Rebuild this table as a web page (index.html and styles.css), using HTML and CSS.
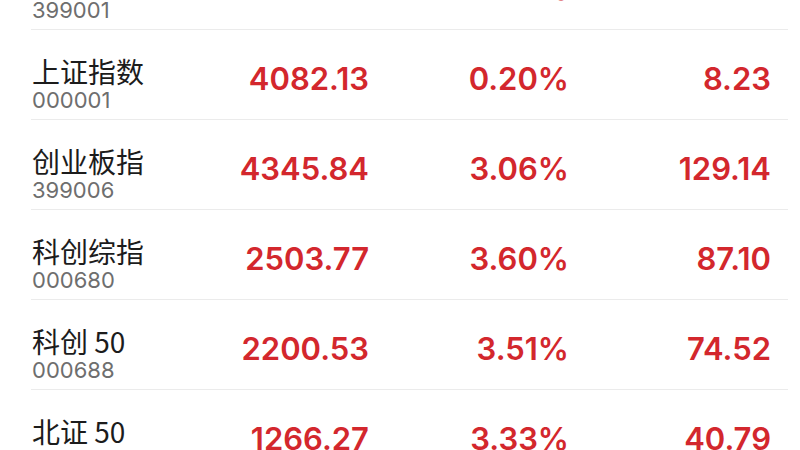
FILE: index.html
```html
<!DOCTYPE html>
<html lang="zh-CN">
<head>
    <meta charset="UTF-8">
    <meta name="viewport" content="width=device-width, initial-scale=1.0">
    <title>指数行情</title>
    <link rel="stylesheet" href="styles.css">
</head>
<body>
    <div class="quote-list">
        <div class="quote-row">
            <div class="name-cell">
                <div class="index-name">深证成指</div>
                <div class="index-code">399001</div>
            </div>
            <div class="num price">13150.52</div>
            <div class="num pct">0.52%</div>
            <div class="num change">68.30</div>
        </div>
        <div class="quote-row">
            <div class="name-cell">
                <div class="index-name">上证指数</div>
                <div class="index-code">000001</div>
            </div>
            <div class="num price">4082.13</div>
            <div class="num pct">0.20%</div>
            <div class="num change">8.23</div>
        </div>
        <div class="quote-row">
            <div class="name-cell">
                <div class="index-name">创业板指</div>
                <div class="index-code">399006</div>
            </div>
            <div class="num price">4345.84</div>
            <div class="num pct">3.06%</div>
            <div class="num change">129.14</div>
        </div>
        <div class="quote-row">
            <div class="name-cell">
                <div class="index-name">科创综指</div>
                <div class="index-code">000680</div>
            </div>
            <div class="num price">2503.77</div>
            <div class="num pct">3.60%</div>
            <div class="num change">87.10</div>
        </div>
        <div class="quote-row">
            <div class="name-cell">
                <div class="index-name">科创 50</div>
                <div class="index-code">000688</div>
            </div>
            <div class="num price">2200.53</div>
            <div class="num pct">3.51%</div>
            <div class="num change">74.52</div>
        </div>
        <div class="quote-row">
            <div class="name-cell">
                <div class="index-name">北证 50</div>
                <div class="index-code">899050</div>
            </div>
            <div class="num price">1266.27</div>
            <div class="num pct">3.33%</div>
            <div class="num change">40.79</div>
        </div>
    </div>
</body>
</html>
```

FILE: styles.css
```css
body {
    margin: 0;
    padding: 0;
    background-color: #ffffff;
    font-family: "Inter", "Noto Sans CJK SC", sans-serif;
    overflow: hidden;
}

.quote-list {
    margin-top: -60px;
}

.quote-row {
    display: grid;
    grid-template-columns: 187px 150px 200px 202px;
    align-items: start;
    height: 90px;
    box-sizing: border-box;
    margin: 0 12px 0 31px;
    padding: 24px 18px 0 1px;
    border-bottom: 1px solid #ebebeb;
}

.index-name {
    font-family: "Noto Sans CJK SC", sans-serif;
    font-size: 28px;
    line-height: 34px;
    color: #1c1c1c;
}

.index-code {
    font-family: "Inter", sans-serif;
    font-size: 22px;
    line-height: 24px;
    color: #6e6e6e;
}

.num {
    text-align: right;
    font-size: 31px;
    font-weight: 600;
    line-height: 40px;
    padding-top: 5px;
    color: #d3272d;
}
```
